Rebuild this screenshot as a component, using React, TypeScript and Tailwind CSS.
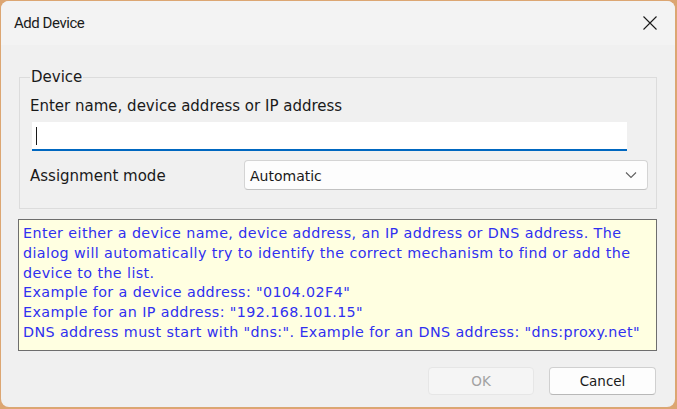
import React, { useState } from 'react';

const uiFont = { fontFamily: '"DejaVu Sans", Tahoma, sans-serif' };

const Chevron: React.FC = () => (
  <svg width="12" height="8" viewBox="0 0 12 8" fill="none">
    <path d="M1 1.5 L6 6.5 L11 1.5" stroke="#5f5f5f" strokeWidth="1.1" />
  </svg>
);

const CloseIcon: React.FC = () => (
  <svg width="14" height="14" viewBox="0 0 14 14" fill="none">
    <path d="M0.5 0.5 L13.5 13.5 M13.5 0.5 L0.5 13.5" stroke="#1a1a1a" strokeWidth="1.1" />
  </svg>
);

export default function App() {
  const [name, setName] = useState('');

  return (
    <div className="w-[677px] h-[409px] bg-[#dca672] pt-px pl-px pr-[2px] pb-[2px]">
      <div className="w-full h-full flex flex-col rounded-[8px] overflow-hidden bg-[#f0f0f0]">
        {/* title bar */}
        <div className="h-[44px] shrink-0 flex items-center justify-between pl-[13px] pr-[18px] bg-[#f3f3f3]">
          <span
            className="text-[15px] tracking-[-0.45px] text-[#1b1b1b]"
            style={{ fontFamily: 'Roboto, "Noto Sans", sans-serif' }}
          >
            Add Device
          </span>
          <CloseIcon />
        </div>

        <div className="flex flex-col px-[18px] pt-[23px]" style={uiFont}>
          {/* group box */}
          <fieldset className="border border-[#dcdcdc] h-[141px] px-[12px]">
            <legend className="-ml-[2px] px-[1px] text-[15px] text-[#1a1a1a] leading-[18px]">Device</legend>
            <div className="pt-[11px] -ml-[2px] text-[15px] text-[#1a1a1a] leading-[18px]">
              Enter name, device address or IP address
            </div>
            <div className="mt-[7px] mr-[17px] h-[29px] bg-white border-b-2 border-[#0067c0] flex items-center px-[3px]">
              <input
                value={name}
                onChange={e => setName(e.target.value)}
                className="w-full h-full outline-none bg-transparent text-[14px]"
              />
              <span className="absolute ml-[1px] w-px h-[18px] bg-[#1a1a1a]" />
            </div>
            <div className="mt-[9px] flex items-center">
              <span className="w-[212px] -ml-[2px] mr-[2px] pt-[2px] text-[15px] text-[#1a1a1a]">Assignment mode</span>
              <div className="flex-1 h-[30px] -mr-[4px] flex items-center justify-between pl-[5px] pr-[10px] bg-[#fdfdfd] border border-[#d4d4d4] border-b-[#c2c2c2] rounded-[4px]">
                <span className="pt-[2px] text-[14px] text-[#1a1a1a]">Automatic</span>
                <Chevron />
              </div>
            </div>
          </fieldset>

          {/* info box */}
          <div className="mt-[10px] h-[132px] -ml-px border border-[#6e6e6e] bg-[#ffffe1] px-[4px] pt-[4px] text-[14.3px] tracking-[0.4px] leading-[19.8px] text-[#3030f0]">
            <div>
              Enter either a device name, device address, an IP address or DNS address. The
              <br />
              dialog will automatically try to identify the correct mechanism to find or add the
              <br />
              device to the list.
            </div>
            <div>Example for a device address: "0104.02F4"</div>
            <div>Example for an IP address: "192.168.101.15"</div>
            <div className="whitespace-nowrap">DNS address must start with "dns:". Example for an DNS address: "dns:proxy.net"</div>
          </div>

          {/* buttons */}
          <div className="mt-[16px] flex justify-end gap-[15px] pr-[1px]">
            <button
              disabled
              className="w-[106px] h-[28px] rounded-[4px] bg-[#f5f5f5] border border-[#e6e6e6] text-[13.5px] text-[#a2a2a2]"
            >
              OK
            </button>
            <button className="w-[107px] h-[28px] rounded-[4px] bg-[#fdfdfd] border border-[#d0d0d0] border-b-[#b8b8b8] text-[13.5px] text-[#1a1a1a]">
              Cancel
            </button>
          </div>
        </div>
      </div>
    </div>
  );
}
